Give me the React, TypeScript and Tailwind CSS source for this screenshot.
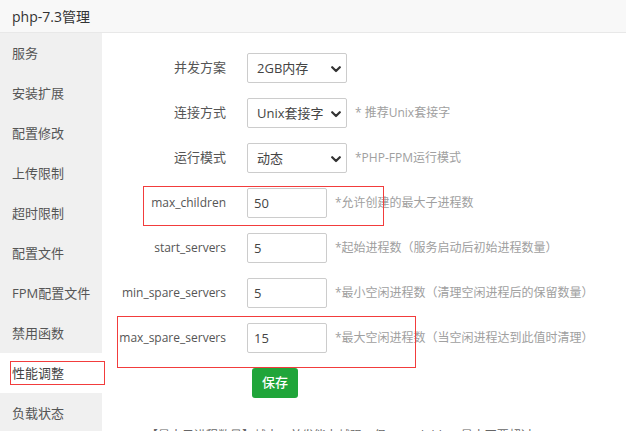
import React from "react";

const menu = ["服务", "安装扩展", "配置修改", "上传限制", "超时限制", "配置文件", "FPM配置文件", "禁用函数", "性能调整", "负载状态"];

function Chevron() {
  return (
    <svg className="absolute right-[5px] top-[12px]" width="10" height="7" viewBox="0 0 10 7" fill="none">
      <path d="M1.2 1.2 L5 5 L8.8 1.2" stroke="#333" strokeWidth="2.2" strokeLinecap="round" strokeLinejoin="round" />
    </svg>
  );
}

function SelectBox({ value }: { value: string }) {
  return (
    <div className="relative w-[100px] h-[30px] border border-[#cccccc] rounded-[2px] bg-white pl-[9px] text-[13px] text-[#444] leading-[28px]">
      {value}
      <Chevron />
    </div>
  );
}

function InputBox({ value }: { value: string }) {
  return (
    <div className="w-[80px] h-[30px] border border-[#cccccc] rounded-[2px] bg-white pl-[6px] text-[13px] text-[#444] leading-[28px]">
      {value}
    </div>
  );
}

function Row({ label, latin, children, help }: { label: string; latin?: boolean; children: React.ReactNode; help?: string }) {
  return (
    <div className="flex items-center h-[30px] mb-[15px]">
      <div className={latin ? "w-[110px] mr-[21px] text-right text-[12px] text-[#555]" : "w-[110px] mr-[21px] text-right text-[13px] text-[#555]"}>
        {label}
      </div>
      {children}
      {help && <div className="ml-[8px] text-[12px] text-[#a0a0a0]">{help}</div>}
    </div>
  );
}

export default function App() {
  return (
    <div className="relative w-[626px] h-[431px] overflow-hidden bg-white font-['Open_Sans','Noto_Sans_CJK_SC',sans-serif]">
      <div className="h-[33px] border-b border-[#e8e8e8] bg-[#f8f8f8] pl-[12px] flex items-center text-[14px] text-[#333]">
        php-7.3管理
      </div>
      <div className="flex">
        <div className="w-[102px] h-[398px] bg-[#f0f0f0] shrink-0">
          {menu.map((m) => (
            <div
              key={m}
              className={
                m === "性能调整"
                  ? "h-[40px] leading-[40px] pl-[12px] text-[13px] text-[#444] bg-white"
                  : "h-[40px] leading-[40px] pl-[12px] text-[13px] text-[#555]"
              }
            >
              {m}
            </div>
          ))}
        </div>
        <div className="flex-1 pt-[20px] pl-[14px]">
          <Row label="并发方案">
            <SelectBox value="2GB内存" />
          </Row>
          <Row label="连接方式" help="* 推荐Unix套接字">
            <SelectBox value="Unix套接字" />
          </Row>
          <Row label="运行模式" help="*PHP-FPM运行模式">
            <SelectBox value="动态" />
          </Row>
          <Row label="max_children" latin help="*允许创建的最大子进程数">
            <InputBox value="50" />
          </Row>
          <Row label="start_servers" latin help="*起始进程数（服务启动后初始进程数量）">
            <InputBox value="5" />
          </Row>
          <Row label="min_spare_servers" latin help="*最小空闲进程数（清理空闲进程后的保留数量）">
            <InputBox value="5" />
          </Row>
          <Row label="max_spare_servers" latin help="*最大空闲进程数（当空闲进程达到此值时清理）">
            <InputBox value="15" />
          </Row>
          <div className="ml-[136px] w-[46px] h-[30px] rounded-[3px] bg-[#20a53a] text-white text-[13px] font-medium flex items-center justify-center">
            保存
          </div>
          <div className="ml-[30px] mt-[28px] text-[12px] leading-[20px] text-[#666] whitespace-nowrap">
            【最大子进程数量】越大，并发能力越强，但max_children最大不要超过5000
          </div>
        </div>
      </div>
      <div className="absolute left-[10px] top-[361px] w-[95px] h-[24px] border border-[#f23c3c]" />
      <div className="absolute left-[143px] top-[186px] w-[241px] h-[40px] border border-[#f23c3c]" />
      <div className="absolute left-[117px] top-[316px] w-[299px] h-[52px] border border-[#f23c3c]" />
    </div>
  );
}
